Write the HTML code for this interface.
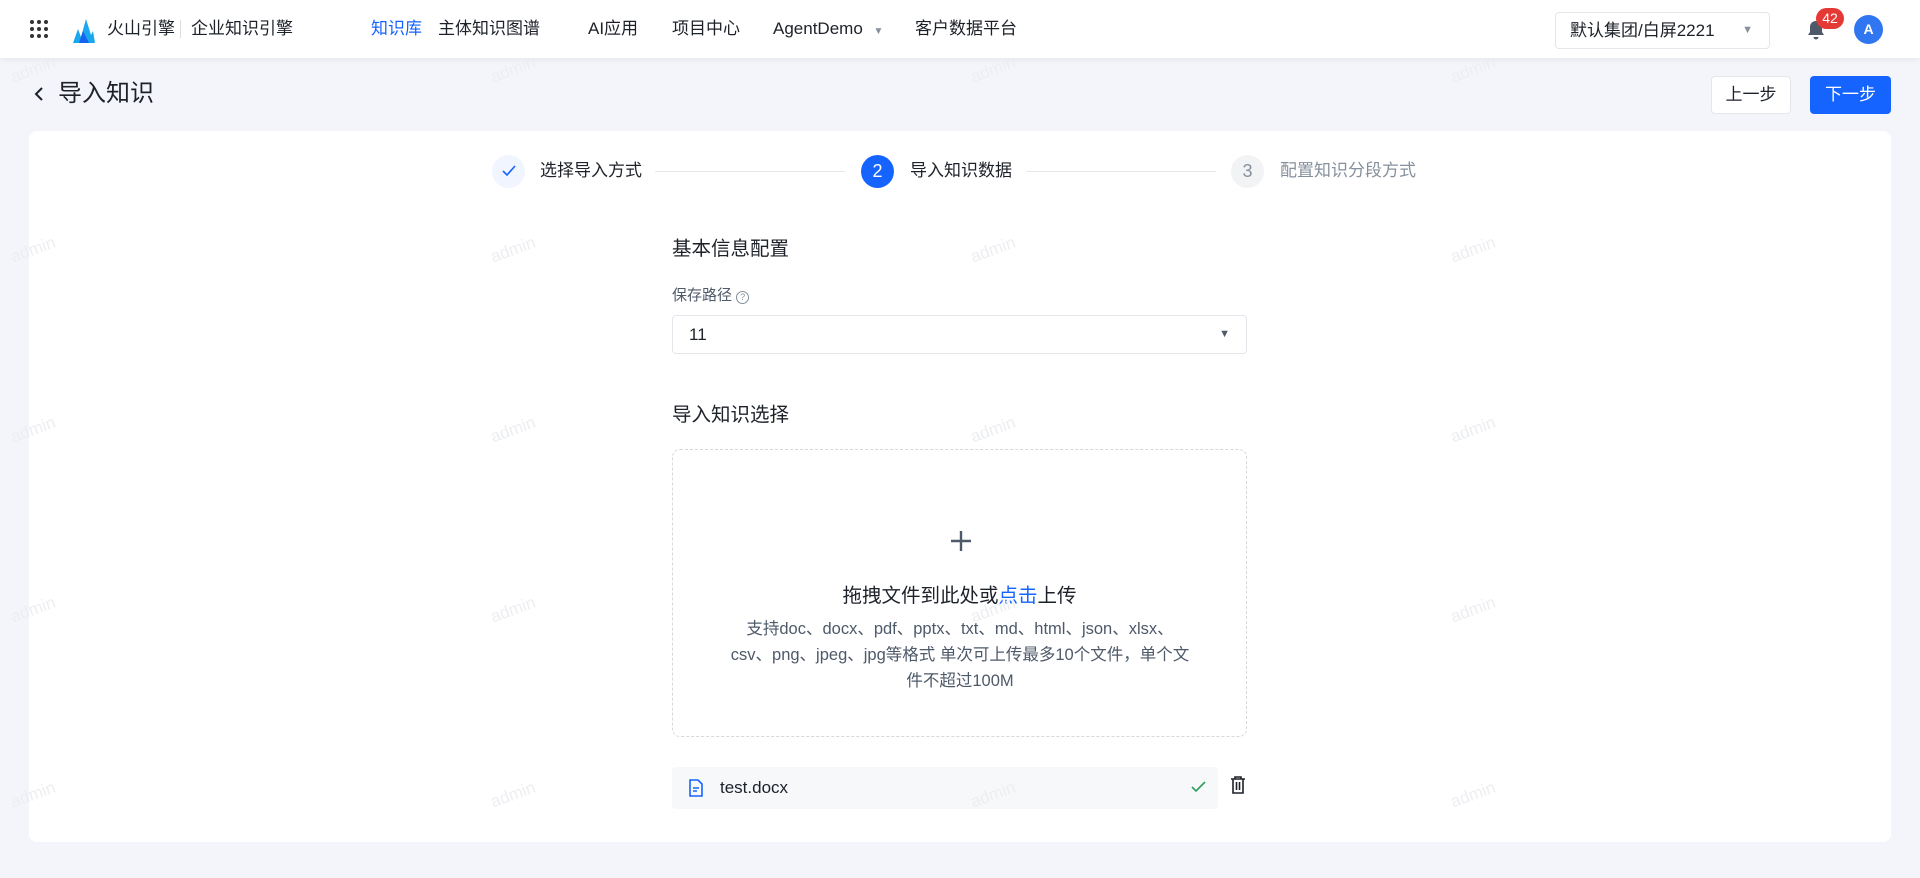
<!DOCTYPE html>
<html><head><meta charset="utf-8">
<style>
*{box-sizing:border-box;margin:0;padding:0}
body{width:1920px;height:878px;overflow:hidden;background:#f3f5fa;font-family:"Liberation Sans","Noto Sans CJK SC",sans-serif;color:#1d2129;position:relative}
.hdr{position:absolute;left:0;top:0;width:1920px;height:58px;background:#fff;box-shadow:0 2px 6px rgba(0,0,0,.06);z-index:2}
.abs{position:absolute}
.nav{position:absolute;top:18px;font-size:17px;color:#1d2129;line-height:22px}
.wm{position:absolute;color:#eceef1;font-size:17px;transform:rotate(-20deg);z-index:5;pointer-events:none}
.card{position:absolute;left:29px;top:131px;width:1862px;height:711px;background:#fff;border-radius:8px}
.circ{position:absolute;top:155px;width:33px;height:33px;border-radius:50%;text-align:center;line-height:33px;font-size:18px}
.stxt{position:absolute;top:160px;font-size:17px;line-height:22px}
.line{position:absolute;top:171px;height:1px;background:#e5e6eb}
.btn{position:absolute;top:76px;height:38px;border-radius:4px;font-size:17px;line-height:38px;text-align:center}
</style></head><body>
<div class="hdr">
  <svg class="abs" style="left:29px;top:19px" width="20" height="20" viewBox="0 0 20 20" fill="#333"><circle cx="3" cy="3" r="2"/><circle cx="10" cy="3" r="2"/><circle cx="17" cy="3" r="2"/><circle cx="3" cy="10" r="2"/><circle cx="10" cy="10" r="2"/><circle cx="17" cy="10" r="2"/><circle cx="3" cy="17" r="2"/><circle cx="10" cy="17" r="2"/><circle cx="17" cy="17" r="2"/></svg>
  <svg class="abs" style="left:73px;top:17px" width="22" height="26" viewBox="0 0 22 26"><path d="M0 26 L5 12 L8 20 L13 2 L18 18 L20 14 L22 26Z" fill="#1aa7ee"/><path d="M6 26 L10 14 L13 20 L16 26Z" fill="#1464f0"/></svg>
  <div class="nav" style="left:107px">火山引擎</div>
  <div class="abs" style="left:180px;top:20px;width:1px;height:18px;background:#ddd"></div>
  <div class="nav" style="left:191px">企业知识引擎</div>
  <div class="nav" style="left:371px;color:#1664ff">知识库</div>
  <div class="nav" style="left:438px">主体知识图谱</div>
  <div class="nav" style="left:588px">AI应用</div>
  <div class="nav" style="left:672px">项目中心</div>
  <div class="nav" style="left:773px">AgentDemo <span style="font-size:10px;color:#86909c;margin-left:6px">▼</span></div>
  <div class="nav" style="left:915px">客户数据平台</div>
  <div class="abs" style="left:1555px;top:12px;width:215px;height:37px;border:1px solid #e5e6eb;border-radius:4px;font-size:17px;line-height:35px;padding-left:14px">默认集团/白屏2221<span style="position:absolute;right:16px;font-size:11px;color:#86909c">▼</span></div>
  <svg class="abs" style="left:1807px;top:20px" width="18" height="20" viewBox="0 0 18 20" fill="#4e5969"><path d="M9 1c-3.5 0-6 2.6-6 6v5L1 15h16l-2-3V7c0-3.4-2.5-6-6-6z"/><path d="M6.5 17a2.5 2.5 0 0 0 5 0z"/></svg>
  <div class="abs" style="left:1816px;top:8px;width:28px;height:21px;background:#e53935;border-radius:11px;color:#fff;font-size:14px;text-align:center;line-height:21px">42</div>
  <div class="abs" style="left:1854px;top:15px;width:29px;height:29px;background:#2f76f0;border-radius:50%;color:#fff;font-size:14px;font-weight:bold;text-align:center;line-height:29px">A</div>
</div>
<svg class="abs" style="left:33px;top:86px" width="12" height="16" viewBox="0 0 12 16"><path d="M9 2 L3 8 L9 14" fill="none" stroke="#1d2129" stroke-width="2"/></svg>
<div class="abs" style="left:58px;top:79px;font-size:24px;line-height:30px">导入知识</div>
<div class="btn" style="left:1711px;width:80px;background:#fff;border:1px solid #e5e6eb;line-height:36px">上一步</div>
<div class="btn" style="left:1810px;width:81px;background:#1664ff;color:#fff">下一步</div>
<div class="card"></div>
<div class="circ" style="left:492px;background:#f0f5ff;color:#1664ff"><svg width="14" height="12" viewBox="0 0 14 12" style="margin-top:10px"><path d="M1 6 L5 10 L13 1" fill="none" stroke="#1664ff" stroke-width="1.6"/></svg></div>
<div class="stxt" style="left:540px">选择导入方式</div>
<div class="line" style="left:655px;width:190px"></div>
<div class="circ" style="left:861px;background:#1664ff;color:#fff">2</div>
<div class="stxt" style="left:910px">导入知识数据</div>
<div class="line" style="left:1026px;width:190px"></div>
<div class="circ" style="left:1231px;background:#f2f3f5;color:#86909c">3</div>
<div class="stxt" style="left:1280px;color:#86909c">配置知识分段方式</div>
<div class="abs" style="left:672px;top:237px;font-size:19.5px;line-height:24px">基本信息配置</div>
<div class="abs" style="left:672px;top:286px;font-size:15px;line-height:20px;color:#4e5969">保存路径 <span style="display:inline-block;width:13px;height:13px;border:1px solid #86909c;border-radius:50%;font-size:9px;line-height:11px;text-align:center;color:#86909c;vertical-align:0">?</span></div>
<div class="abs" style="left:672px;top:315px;width:575px;height:39px;border:1px solid #e5e6eb;border-radius:4px;font-size:17px;line-height:37px;padding-left:16px">11<span style="position:absolute;right:16px;font-size:11px;color:#4e5969">▼</span></div>
<div class="abs" style="left:672px;top:403px;font-size:19.5px;line-height:24px">导入知识选择</div>
<div class="abs" style="left:672px;top:449px;width:575px;height:288px;border:1px dashed #d6d8dd;border-radius:8px;text-align:center">
  <svg class="abs" style="left:277px;top:80px" width="22" height="22" viewBox="0 0 22 22"><path d="M11 1V21M1 11H21" stroke="#4e5969" stroke-width="2.4"/></svg>
  <div class="abs" style="left:0;top:133px;width:100%;font-size:19.5px;line-height:26px">拖拽文件到此处或<span style="color:#1664ff">点击</span>上传</div>
  <div class="abs" style="left:56px;top:166px;width:462px;font-size:16.5px;line-height:26px;color:#4e5969">支持doc、docx、pdf、pptx、txt、md、html、json、xlsx、<br>csv、png、jpeg、jpg等格式 单次可上传最多10个文件，单个文<br>件不超过100M</div>
</div>
<div class="abs" style="left:672px;top:767px;width:546px;height:42px;background:#f7f8fa;border-radius:4px">
  <svg class="abs" style="left:16px;top:12px" width="15" height="18" viewBox="0 0 15 18"><path d="M2 1H10L14 5V17H2Z" fill="none" stroke="#1664ff" stroke-width="1.6"/><path d="M5 9H11M5 12H9" stroke="#1664ff" stroke-width="1.6"/></svg>
  <div class="abs" style="left:48px;top:10px;font-size:17px;line-height:22px">test.docx</div>
  <svg class="abs" style="left:519px;top:14px" width="15" height="12" viewBox="0 0 15 12"><path d="M1 6 L5 10 L14 1" fill="none" stroke="#2e9e5b" stroke-width="1.6"/></svg>
</div>
<svg class="abs" style="left:1230px;top:776px" width="16" height="18" viewBox="0 0 16 18"><path d="M1 3H15M5 3V1H11V3M3 3V17H13V3M6.5 6V14M9.5 6V14" fill="none" stroke="#1d2129" stroke-width="1.6"/></svg>
<div class="wm" style="left:10px;top:60px">admin</div><div class="wm" style="left:490px;top:60px">admin</div><div class="wm" style="left:970px;top:60px">admin</div><div class="wm" style="left:1450px;top:60px">admin</div>
<div class="wm" style="left:10px;top:240px">admin</div><div class="wm" style="left:490px;top:240px">admin</div><div class="wm" style="left:970px;top:240px">admin</div><div class="wm" style="left:1450px;top:240px">admin</div>
<div class="wm" style="left:10px;top:420px">admin</div><div class="wm" style="left:490px;top:420px">admin</div><div class="wm" style="left:970px;top:420px">admin</div><div class="wm" style="left:1450px;top:420px">admin</div>
<div class="wm" style="left:10px;top:600px">admin</div><div class="wm" style="left:490px;top:600px">admin</div><div class="wm" style="left:970px;top:600px">admin</div><div class="wm" style="left:1450px;top:600px">admin</div>
<div class="wm" style="left:10px;top:785px">admin</div><div class="wm" style="left:490px;top:785px">admin</div><div class="wm" style="left:970px;top:785px">admin</div><div class="wm" style="left:1450px;top:785px">admin</div>
</body></html>
